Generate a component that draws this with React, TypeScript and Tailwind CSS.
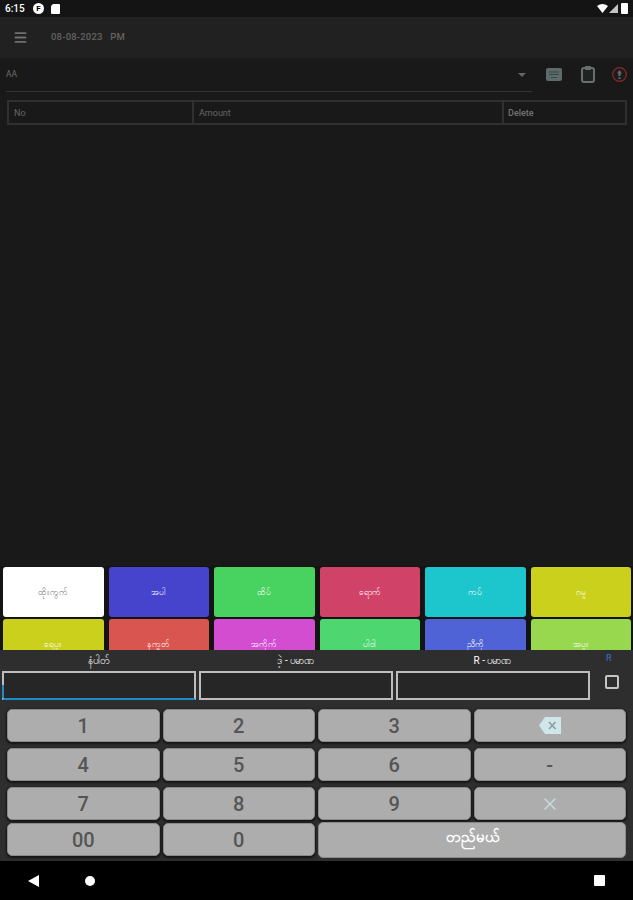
import { Menu, X } from "lucide-react";

const font = "font-['Roboto','Noto_Sans',sans-serif]";

const topRow = [
  { label: "ထိုးကွက်", bg: "bg-white", text: "text-[#777]" },
  { label: "အပါ", bg: "bg-[#4643cc]", text: "text-white" },
  { label: "ထိပ်", bg: "bg-[#48d25f]", text: "text-white" },
  { label: "ရောက်", bg: "bg-[#d04268]", text: "text-white" },
  { label: "ကပ်", bg: "bg-[#1cc6cc]", text: "text-white" },
  { label: "ဂမူ", bg: "bg-[#cbd01d]", text: "text-white" },
];

const bottomRow = [
  { label: "ရေပူး", bg: "bg-[#cbd01d]" },
  { label: "နက္ခတ်", bg: "bg-[#d95550]" },
  { label: "အကိုက်", bg: "bg-[#d24dd0]" },
  { label: "ပါဝါ", bg: "bg-[#4ed671]" },
  { label: "ညီကို", bg: "bg-[#4f63d6]" },
  { label: "အပူး", bg: "bg-[#98d84e]" },
];

const keys = ["1", "2", "3", "del", "4", "5", "6", "-", "7", "8", "9", "x"];

const keyClass =
  "flex h-[33px] items-center justify-center rounded-[5px] border border-[#8a8a8a] bg-[#adadad] text-[20px] font-medium text-[#555] shadow-[0_1px_2px_1px_#161616]";

export default function App() {
  return (
    <div className={`flex h-[900px] w-[633px] flex-col overflow-hidden bg-[#191919] ${font}`}>
      {/* status bar */}
      <div className="flex h-[17px] items-center justify-between bg-[#141414] pl-[5px] pr-[5px] text-white">
        <div className="flex items-center gap-[7px]">
          <span className="w-[21px] text-[10px] font-medium leading-none">6:15</span>
          <span className="flex size-[11px] items-center justify-center rounded-full bg-white text-[8px] font-bold leading-none text-black">F</span>
          <svg width="9" height="10" viewBox="0 0 9 10"><path d="M2 0 H8 Q9 0 9 1 V9 Q9 10 8 10 H1 Q0 10 0 9 V2 Z" fill="#fff" /></svg>
        </div>
        <div className="flex items-center">
          <svg width="11" height="9" viewBox="0 0 11 9"><path d="M0 2 Q5.5 -2 11 2 L5.5 9 Z" fill="#fff" /></svg>
          <svg className="ml-[1px]" width="9" height="9" viewBox="0 0 9 9"><path d="M9 0 V9 H0 Z" fill="#c4c4c4" /></svg>
          <span className="ml-[3px] h-[11px] w-[7px] rounded-[1px] bg-white" />
        </div>
      </div>

      {/* toolbar */}
      <div className="flex h-[41px] items-center bg-[#212121] pl-[13px]">
        <Menu className="size-[15px] text-[#6f6f6f]" strokeWidth={3} />
        <span className="ml-[23px] text-[9.5px] font-medium tracking-[0.2px] text-[#636363]">08-08-2023&nbsp;&nbsp;&nbsp;PM</span>
      </div>

      {/* agent select row */}
      <div className="flex h-[42px] items-start pl-[6px] pr-[6px]">
        <div className="flex h-[34px] w-[527px] items-center justify-between border-b border-[#333] pr-[6px]">
          <span className="text-[8.5px] text-[#6e6e6e]">AA</span>
          <span className="h-0 w-0 border-x-[4px] border-t-[4px] border-x-transparent border-t-[#666]" />
        </div>
        <div className="ml-[14px] flex items-center pt-[8px]">
          <svg width="16" height="13" viewBox="0 0 16 13">
            <rect width="16" height="13" rx="2" fill="#5d6b6b" />
            <path d="M3 4 H13 M3 6.5 H13 M5 9.5 H11" stroke="#3c4545" strokeWidth="1.2" />
          </svg>
          <svg className="ml-[19px]" width="14" height="17" viewBox="0 0 14 17">
            <rect x="1" y="2" width="12" height="14" rx="2" fill="#222" stroke="#66706f" strokeWidth="2" />
            <rect x="4" y="0" width="6" height="4" rx="1" fill="#66706f" />
          </svg>
          <svg className="ml-[17px]" width="15" height="15" viewBox="0 0 15 15">
            <circle cx="7.5" cy="7.5" r="6.8" fill="#1c1c1c" stroke="#8c2a2a" strokeWidth="1.2" />
            <path d="M7.5 3 L10 6.5 H8.6 V9 H6.4 V6.5 H5 Z M6.5 10.2 H8.5 V12 H6.5 Z" fill="#6a6a6a" />
          </svg>
        </div>
      </div>

      {/* table header */}
      <div className="mx-[7px] flex h-[25px] w-[620px] shrink-0 border-2 border-[#303030] text-[9px] text-[#666]">
        <div className="flex w-[185px] items-center border-r-2 border-[#303030] pl-[5px] pt-[2px]">No</div>
        <div className="flex w-[310px] items-center border-r-2 border-[#303030] pl-[5px] pt-[2px]">Amount</div>
        <div className="flex flex-1 items-center pl-[4px] pt-[2px] font-medium text-[#747474]">Delete</div>
      </div>

      <div className="flex-1" />

      {/* category buttons */}
      <div className="h-[84px] shrink-0 overflow-hidden bg-[#141414] pl-[3px] pr-[2px] pt-[1px]">
        <div className="grid grid-cols-6 gap-x-[5px] gap-y-[2px]">
          {topRow.map((b) => (
            <div key={b.label} className={`flex h-[50px] items-center justify-center rounded-[3px] text-[8.5px] ${b.bg} ${b.text}`}>
              {b.label}
            </div>
          ))}
          {bottomRow.map((b) => (
            <div key={b.label} className={`flex h-[50px] items-start justify-center rounded-[3px] pt-[19px] text-[8.5px] text-white ${b.bg}`}>
              {b.label}
            </div>
          ))}
        </div>
      </div>

      {/* input panel */}
      <div className="shrink-0 bg-[#2e2e2e]">
        <div className="flex h-[21px] items-center text-[10px] text-white">
          <span className="w-[197px] text-center">နံပါတ်</span>
          <span className="w-[197px] text-center">ဒဲ့ - ပမာဏ</span>
          <span className="w-[197px] text-center">R - ပမာဏ</span>
          <span className="ml-[15px] mt-[-4px] text-[9px] text-[#3f6fd0]">R</span>
        </div>
        <div className="flex items-start pl-[2px]">
          <div className="relative h-[29px] w-[194px] border-2 border-[#bdbdbd] border-b-[#1f88c9] bg-[#262626]">
            <span className="absolute -left-[2px] bottom-0 h-[13px] w-[2px] bg-[#1f88c9]" />
          </div>
          <div className="ml-[3px] h-[29px] w-[194px] border-2 border-[#bdbdbd] bg-[#262626]" />
          <div className="ml-[3px] h-[29px] w-[194px] border-2 border-[#bdbdbd] bg-[#262626]" />
          <div className="ml-[15px] mt-[4px] size-[14px] rounded-[2px] border-2 border-[#c4c4c4]" />
        </div>

        {/* keypad */}
        <div className="grid grid-cols-4 gap-x-[3px] gap-y-[6px] px-[7px] pt-[9px]">
          {keys.map((k) => (
            <div key={k} className={keyClass}>
              {k === "del" ? (
                <svg width="22" height="17" viewBox="0 0 22 17">
                  <path d="M6 0 H22 V17 H6 L0 8.5 Z" fill="#cfe6ea" />
                  <path d="M10 5 L16.5 12 M16.5 5 L10 12" stroke="#8f9a9c" strokeWidth="1.5" />
                </svg>
              ) : k === "x" ? (
                <X className="size-[20px] text-[#c5e0dd]" strokeWidth={1.6} />
              ) : (
                k
              )}
            </div>
          ))}
        </div>
        <div className="grid grid-cols-4 items-start gap-x-[3px] px-[7px] pb-[3px] pt-[2px]">
          <div className={`${keyClass} mt-[1px]`}>00</div>
          <div className={`${keyClass} mt-[1px]`}>0</div>
          <div className="col-span-2 flex h-[36px] items-center justify-center rounded-[5px] border border-[#8a8a8a] bg-[#adadad] pb-[6px] text-[15px] font-bold text-white">
            တည်မယ်
          </div>
        </div>
      </div>

      {/* nav bar */}
      <div className="flex h-[39px] shrink-0 items-center bg-black">
        <span className="ml-[28px] h-0 w-0 border-y-[6px] border-r-[11px] border-y-transparent border-r-white" />
        <span className="ml-[46px] size-[10px] rounded-full bg-white" />
        <span className="ml-auto mr-[28px] size-[11px] rounded-[1px] bg-white" />
      </div>
    </div>
  );
}
